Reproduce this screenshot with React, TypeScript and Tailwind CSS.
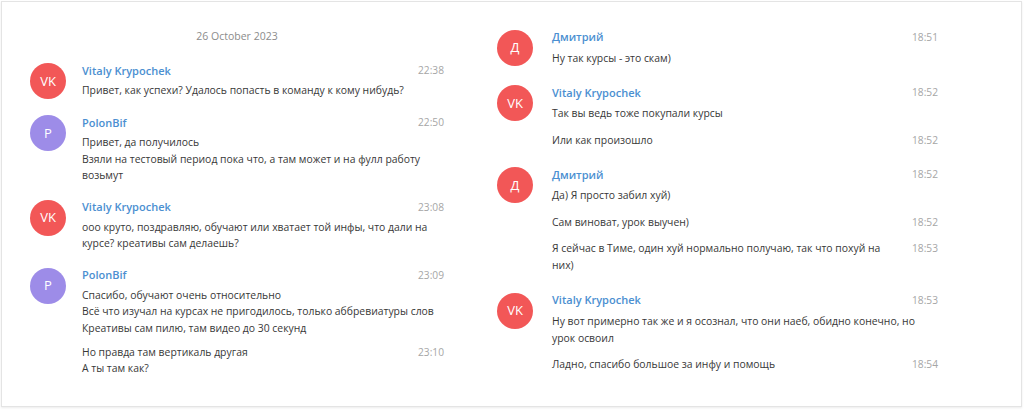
import React from "react";

type Msg = { text: React.ReactNode; time?: string };
type Group = {
  initials: string;
  color: string;
  name: string;
  time: string;
  lines: React.ReactNode;
  conts?: Msg[];
};

const RED = "bg-[#f25757]";
const PURPLE = "bg-[#9d8ce8]";

function Avatar({ initials, color }: { initials: string; color: string }) {
  return (
    <div
      className={`${color} w-9 h-9 shrink-0 rounded-full flex items-center justify-center text-white text-[13px] leading-none`}
    >
      {initials}
    </div>
  );
}

function LeftGroup({ g, first }: { g: Group; first?: boolean }) {
  return (
    <div className={`flex ${first ? "mt-[18px]" : "mt-[16px]"}`}>
      <Avatar initials={g.initials} color={g.color} />
      <div className="ml-[16px] flex-1 min-w-0">
        <div className="flex items-center justify-between h-4">
          <span className="text-[11px] font-semibold text-[#4b8fd1]">{g.name}</span>
          <span className="text-[10.2px] text-[#a6a6a6]">{g.time}</span>
        </div>
        <div className="mt-[3px] text-[10.4px] leading-[16.5px] text-[#383838] whitespace-nowrap">{g.lines}</div>
        {g.conts?.map((c, i) => (
          <div key={i} className="mt-[7.5px] flex justify-between">
            <div className="text-[10.4px] leading-[16.5px] text-[#383838] whitespace-nowrap">{c.text}</div>
            <span className="text-[10.2px] leading-[16.5px] text-[#a6a6a6]">{c.time}</span>
          </div>
        ))}
      </div>
    </div>
  );
}

function RightGroup({ g, first }: { g: Group; first?: boolean }) {
  return (
    <div className={`flex ${first ? "" : "mt-[18.5px]"}`}>
      <Avatar initials={g.initials} color={g.color} />
      <div className="ml-[19px] flex-1 min-w-0">
        <div className="flex items-center justify-between h-4">
          <span className="text-[11px] font-semibold text-[#4b8fd1]">{g.name}</span>
          <span className="text-[10.2px] text-[#a6a6a6]">{g.time}</span>
        </div>
        <div className="mt-[4px] text-[10.4px] leading-[17px] text-[#383838] whitespace-nowrap">{g.lines}</div>
        {g.conts?.map((c, i) => (
          <div key={i} className="mt-[9.5px] flex justify-between">
            <div className="text-[10.4px] leading-[17px] text-[#383838] whitespace-nowrap">{c.text}</div>
            <span className="text-[10.2px] leading-[17px] text-[#a6a6a6] ml-3 shrink-0">{c.time}</span>
          </div>
        ))}
      </div>
    </div>
  );
}

const left: Group[] = [
  {
    initials: "VK",
    color: RED,
    name: "Vitaly Krypochek",
    time: "22:38",
    lines: "Привет, как успехи? Удалось попасть в команду к кому нибудь?",
  },
  {
    initials: "P",
    color: PURPLE,
    name: "PolonBif",
    time: "22:50",
    lines: (
      <>
        Привет, да получилось
        <br />
        Взяли на тестовый период пока что, а там может и на фулл работу
        <br />
        возьмут
      </>
    ),
  },
  {
    initials: "VK",
    color: RED,
    name: "Vitaly Krypochek",
    time: "23:08",
    lines: (
      <>
        ооо круто, поздравляю, обучают или хватает той инфы, что дали на
        <br />
        курсе? креативы сам делаешь?
      </>
    ),
  },
  {
    initials: "P",
    color: PURPLE,
    name: "PolonBif",
    time: "23:09",
    lines: (
      <>
        Спасибо, обучают очень относительно
        <br />
        Всё что изучал на курсах не пригодилось, только аббревиатуры слов
        <br />
        Креативы сам пилю, там видео до 30 секунд
      </>
    ),
    conts: [
      {
        text: (
          <>
            Но правда там вертикаль другая
            <br />А ты там как?
          </>
        ),
        time: "23:10",
      },
    ],
  },
];

const right: Group[] = [
  {
    initials: "Д",
    color: RED,
    name: "Дмитрий",
    time: "18:51",
    lines: "Ну так курсы - это скам)",
  },
  {
    initials: "VK",
    color: RED,
    name: "Vitaly Krypochek",
    time: "18:52",
    lines: "Так вы ведь тоже покупали курсы",
    conts: [{ text: "Или как произошло", time: "18:52" }],
  },
  {
    initials: "Д",
    color: RED,
    name: "Дмитрий",
    time: "18:52",
    lines: "Да) Я просто забил хуй)",
    conts: [
      { text: "Сам виноват, урок выучен)", time: "18:52" },
      {
        text: (
          <>
            Я сейчас в Тиме, один хуй нормально получаю, так что похуй на
            <br />
            них)
          </>
        ),
        time: "18:53",
      },
    ],
  },
  {
    initials: "VK",
    color: RED,
    name: "Vitaly Krypochek",
    time: "18:53",
    lines: (
      <>
        Ну вот примерно так же и я осознал, что они наеб, обидно конечно, но
        <br />
        урок освоил
      </>
    ),
    conts: [{ text: "Ладно, спасибо большое за инфу и помощь", time: "18:54" }],
  },
];

export default function App() {
  return (
    <div className="w-[1024px] h-[410px] bg-white pt-px pl-px font-['Open_Sans',sans-serif]">
      <div className="w-[1021px] h-[406px] border border-[#e4e4e4] shadow-[0_1px_2px_rgba(0,0,0,0.08)] bg-white flex pl-[28px] pt-[27px]">
        <div className="w-[414px]">
          <div className="h-4 flex items-center justify-center text-[10.5px] text-[#8c8c8c]">26 October 2023</div>
          {left.map((g, i) => (
            <LeftGroup key={i} g={g} first={i === 0} />
          ))}
        </div>
        <div className="w-[441px] ml-[53px] pt-[0.5px]">
          {right.map((g, i) => (
            <RightGroup key={i} g={g} first={i === 0} />
          ))}
        </div>
      </div>
    </div>
  );
}
